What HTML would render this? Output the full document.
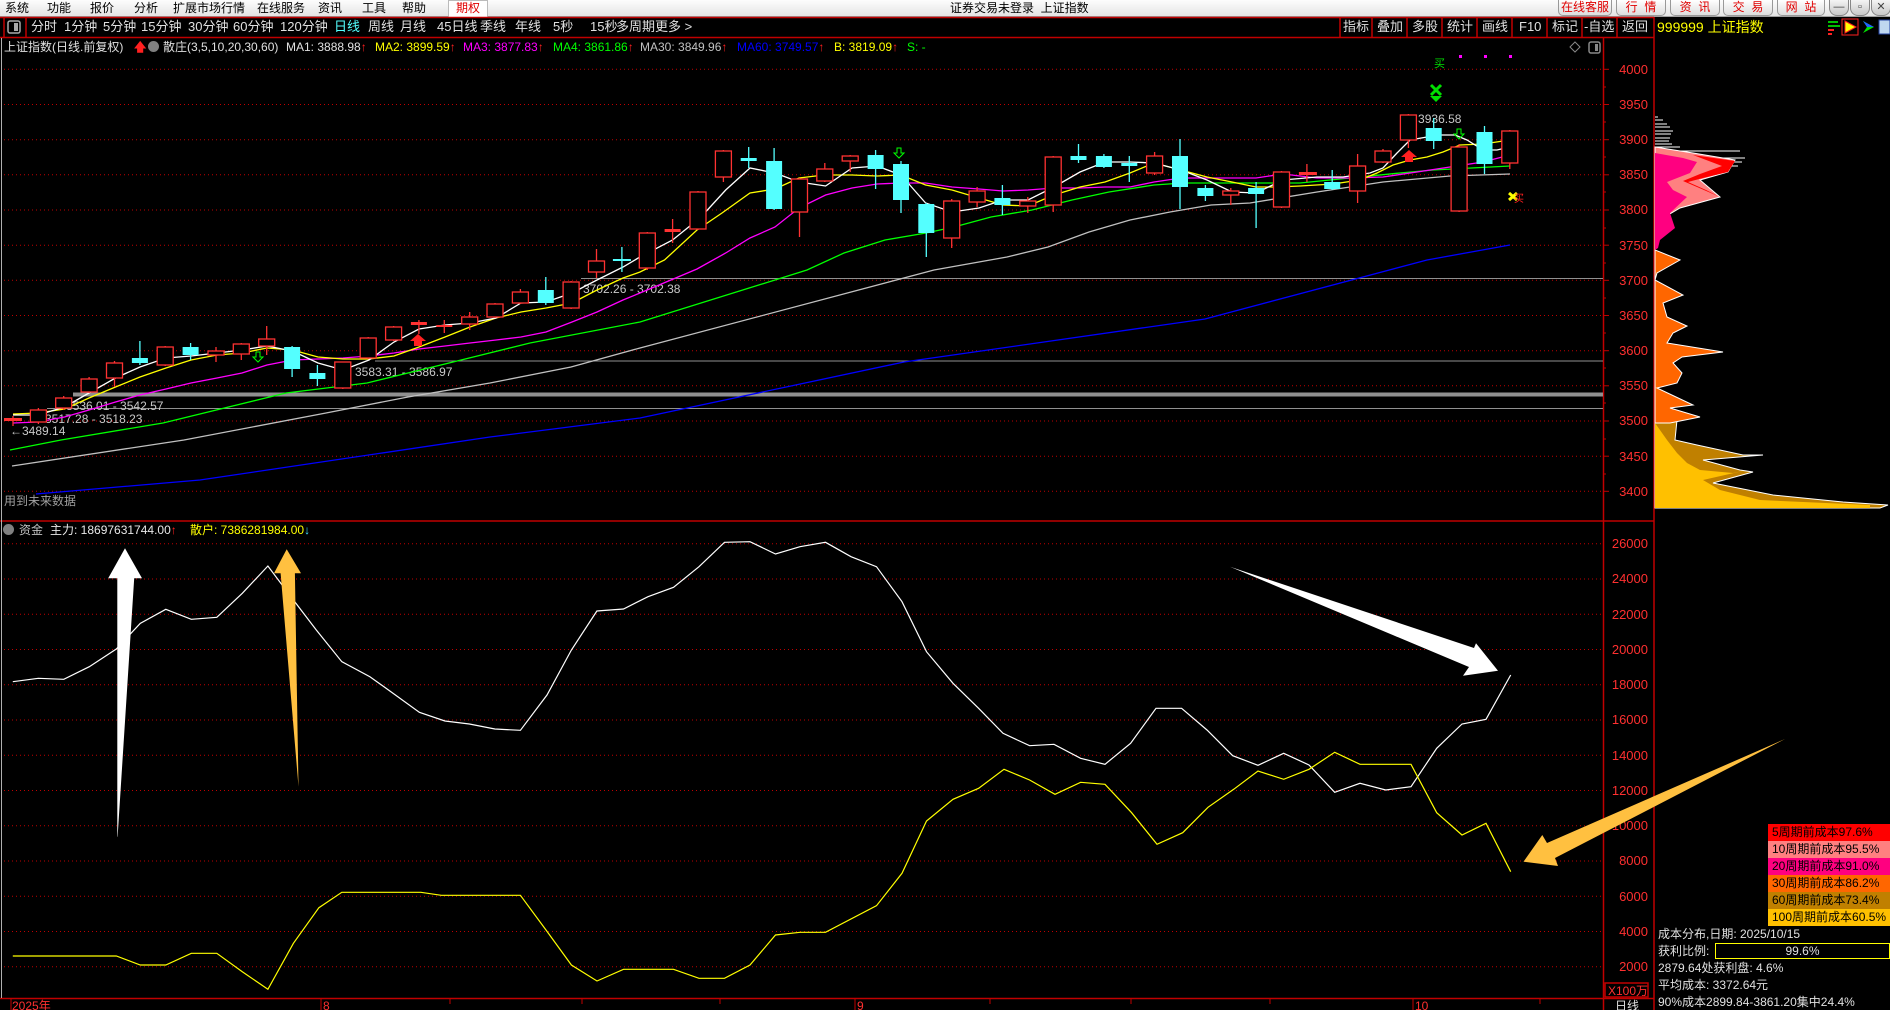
<!DOCTYPE html>
<html><head><meta charset="utf-8">
<style>
*{margin:0;padding:0;box-sizing:border-box}
body{width:1890px;height:1010px;background:#000;overflow:hidden;position:relative;font-family:"Liberation Sans","Noto Sans CJK SC",sans-serif;font-size:12px}
.menu{position:absolute;left:0;top:0;width:1890px;height:17px;background:linear-gradient(#fdfdfd,#e4e4e4);border-bottom:1px solid #a0a0a0}
.menu span{position:absolute;top:1px;font-size:12px;color:#000;line-height:15px}
.t{position:absolute;white-space:nowrap;line-height:14px}
.btn{position:absolute;top:0;height:16px;border:1px solid #999;border-top:none;border-radius:0 0 5px 5px;background:linear-gradient(#fff,#ddd);color:#e00000;font-size:12px;text-align:center;line-height:15px}
.wc{position:absolute;top:0;width:20px;height:16px;border-radius:0 0 8px 8px;background:linear-gradient(#f4f4f4,#c8c8c8);border:1px solid #888;border-top:none;font-size:11px;text-align:center;color:#444;line-height:14px}
.tb{position:absolute;top:20px;color:#e0e0e0;font-size:13px;line-height:14px;white-space:nowrap}
.lg{position:absolute;top:40px;font-size:12px;line-height:14px;white-space:nowrap}
.box{position:absolute;left:1768px;width:122px;height:17px;color:#000;font-size:12px;line-height:17px;padding-left:4px}
.rt{position:absolute;left:1658px;color:#e0e0e0;font-size:12px;line-height:14px;white-space:nowrap}
</style></head><body>
<div class="menu">
<span style="left:5px">系统</span><span style="left:47px">功能</span><span style="left:90px">报价</span><span style="left:134px">分析</span><span style="left:173px">扩展市场行情</span><span style="left:257px">在线服务</span><span style="left:318px">资讯</span><span style="left:362px">工具</span><span style="left:402px">帮助</span>
<span style="left:448px;top:0;width:40px;height:17px;background:#fff;border:1px solid #bbb;border-bottom:none;color:#e00000;text-align:center">期权</span>
<span style="left:950px">证券交易未登录&nbsp;&nbsp;上证指数</span>
</div>
<div class="btn" style="left:1558px;width:54px">在线客服</div>
<div class="btn" style="left:1616px;width:50px">行&nbsp;&nbsp;情</div>
<div class="btn" style="left:1670px;width:50px">资&nbsp;&nbsp;讯</div>
<div class="btn" style="left:1723px;width:50px">交&nbsp;&nbsp;易</div>
<div class="btn" style="left:1777px;width:48px">网&nbsp;&nbsp;站</div>
<div class="wc" style="left:1829px">—</div><div class="wc" style="left:1850px">▫</div><div class="wc" style="left:1871px">✕</div>

<svg style="position:absolute;left:0;top:0" width="1890" height="1010" viewBox="0 0 1890 1010">
<!-- toolbar frame -->
<g stroke="#c00000" stroke-width="1.5" fill="none">
<line x1="0" y1="17.5" x2="1654" y2="17.5"/><line x1="0" y1="37.5" x2="1654" y2="37.5"/>
<line x1="4" y1="17" x2="4" y2="38"/><line x1="26" y1="17" x2="26" y2="38"/>
<line x1="1340" y1="17" x2="1340" y2="38"/><line x1="1372" y1="17" x2="1372" y2="38"/><line x1="1407" y1="17" x2="1407" y2="38"/><line x1="1442" y1="17" x2="1442" y2="38"/><line x1="1477" y1="17" x2="1477" y2="38"/><line x1="1512" y1="17" x2="1512" y2="38"/><line x1="1547" y1="17" x2="1547" y2="38"/><line x1="1582" y1="17" x2="1582" y2="38"/><line x1="1617" y1="17" x2="1617" y2="38"/>
<line x1="1654" y1="17" x2="1654" y2="1010"/>
<line x1="1603.5" y1="38" x2="1603.5" y2="1010"/>
<line x1="0" y1="521" x2="1654" y2="521"/>
<line x1="0" y1="998.5" x2="1654" y2="998.5"/>
<rect x="1605" y="983" width="43" height="14"/>
</g>
<rect x="8" y="21" width="12" height="12" rx="2" fill="none" stroke="#aaa" stroke-width="1.5"/><rect x="14" y="23" width="4" height="8" fill="#aaa"/>
<line x1="1.5" y1="38" x2="1.5" y2="998" stroke="#b0b0b0"/>
<!-- main gridlines -->
<g stroke="#c00000" stroke-width="1" stroke-dasharray="1 3">
<line x1="4" y1="69.3" x2="1603" y2="69.3"/><line x1="4" y1="104.5" x2="1603" y2="104.5"/><line x1="4" y1="139.7" x2="1603" y2="139.7"/><line x1="4" y1="174.8" x2="1603" y2="174.8"/><line x1="4" y1="210" x2="1603" y2="210"/><line x1="4" y1="245.2" x2="1603" y2="245.2"/><line x1="4" y1="280.3" x2="1603" y2="280.3"/><line x1="4" y1="315.5" x2="1603" y2="315.5"/><line x1="4" y1="350.7" x2="1603" y2="350.7"/><line x1="4" y1="385.8" x2="1603" y2="385.8"/><line x1="4" y1="421" x2="1603" y2="421"/><line x1="4" y1="456.2" x2="1603" y2="456.2"/><line x1="4" y1="491.3" x2="1603" y2="491.3"/>
<line x1="4" y1="543.7" x2="1603" y2="543.7"/><line x1="4" y1="579" x2="1603" y2="579"/><line x1="4" y1="614.2" x2="1603" y2="614.2"/><line x1="4" y1="649.5" x2="1603" y2="649.5"/><line x1="4" y1="684.7" x2="1603" y2="684.7"/><line x1="4" y1="720" x2="1603" y2="720"/><line x1="4" y1="755.2" x2="1603" y2="755.2"/><line x1="4" y1="790.5" x2="1603" y2="790.5"/><line x1="4" y1="825.7" x2="1603" y2="825.7"/><line x1="4" y1="861" x2="1603" y2="861"/><line x1="4" y1="896.2" x2="1603" y2="896.2"/><line x1="4" y1="931.5" x2="1603" y2="931.5"/><line x1="4" y1="966.7" x2="1603" y2="966.7"/>
</g>
<!-- axis ticks -->
<g stroke="#c00000">
<line x1="1603" y1="69.3" x2="1609" y2="69.3"/><line x1="1603" y1="104.5" x2="1609" y2="104.5"/><line x1="1603" y1="139.7" x2="1609" y2="139.7"/><line x1="1603" y1="174.8" x2="1609" y2="174.8"/><line x1="1603" y1="210" x2="1609" y2="210"/><line x1="1603" y1="245.2" x2="1609" y2="245.2"/><line x1="1603" y1="280.3" x2="1609" y2="280.3"/><line x1="1603" y1="315.5" x2="1609" y2="315.5"/><line x1="1603" y1="350.7" x2="1609" y2="350.7"/><line x1="1603" y1="385.8" x2="1609" y2="385.8"/><line x1="1603" y1="421" x2="1609" y2="421"/><line x1="1603" y1="456.2" x2="1609" y2="456.2"/><line x1="1603" y1="491.3" x2="1609" y2="491.3"/>
<line x1="1603" y1="87" x2="1606" y2="87"/><line x1="1603" y1="122" x2="1606" y2="122"/><line x1="1603" y1="157" x2="1606" y2="157"/><line x1="1603" y1="192" x2="1606" y2="192"/><line x1="1603" y1="228" x2="1606" y2="228"/><line x1="1603" y1="263" x2="1606" y2="263"/><line x1="1603" y1="298" x2="1606" y2="298"/><line x1="1603" y1="333" x2="1606" y2="333"/><line x1="1603" y1="368" x2="1606" y2="368"/><line x1="1603" y1="403" x2="1606" y2="403"/><line x1="1603" y1="439" x2="1606" y2="439"/><line x1="1603" y1="474" x2="1606" y2="474"/>
<line x1="11" y1="998" x2="11" y2="1010"/><line x1="321" y1="998" x2="321" y2="1010"/><line x1="450" y1="998" x2="450" y2="1004"/><line x1="582" y1="998" x2="582" y2="1004"/><line x1="720" y1="998" x2="720" y2="1004"/><line x1="855" y1="998" x2="855" y2="1010"/><line x1="990" y1="998" x2="990" y2="1004"/><line x1="1131" y1="998" x2="1131" y2="1004"/><line x1="1270" y1="998" x2="1270" y2="1004"/><line x1="1413" y1="998" x2="1413" y2="1010"/><line x1="1540" y1="998" x2="1540" y2="1004"/>
</g>
<g fill="#ff3030" font-size="13" text-anchor="end" font-family="Liberation Sans, sans-serif">
<text x="1648" y="74">4000</text><text x="1648" y="109">3950</text><text x="1648" y="144">3900</text><text x="1648" y="179">3850</text><text x="1648" y="214">3800</text><text x="1648" y="250">3750</text><text x="1648" y="285">3700</text><text x="1648" y="320">3650</text><text x="1648" y="355">3600</text><text x="1648" y="390">3550</text><text x="1648" y="425">3500</text><text x="1648" y="461">3450</text><text x="1648" y="496">3400</text>
<text x="1648" y="548">26000</text><text x="1648" y="583">24000</text><text x="1648" y="619">22000</text><text x="1648" y="654">20000</text><text x="1648" y="689">18000</text><text x="1648" y="724">16000</text><text x="1648" y="760">14000</text><text x="1648" y="795">12000</text><text x="1648" y="830">10000</text><text x="1648" y="865">8000</text><text x="1648" y="901">6000</text><text x="1648" y="936">4000</text><text x="1648" y="971">2000</text>
<text x="1648" y="995" font-size="12">X100万</text>
</g>
<g fill="#ff3030" font-size="12" font-family="Liberation Sans, Noto Sans CJK SC, sans-serif">
<text x="12" y="1010">2025年</text><text x="323" y="1010">8</text><text x="857" y="1010">9</text><text x="1415" y="1010">10</text><text x="1615" y="1010" fill="#e0e0e0">日线</text>
</g>
<!-- horizontal gray support lines -->
<g stroke="#909090">
<line x1="581" y1="278.5" x2="1603" y2="278.5"/>
<line x1="375" y1="361" x2="1603" y2="361"/>
<line x1="73" y1="394.5" x2="1603" y2="394.5" stroke-width="4"/>
<line x1="47" y1="408.5" x2="1603" y2="408.5"/>
</g>
<g fill="#c8c8c8" font-size="12" font-family="Liberation Sans, sans-serif">
<text x="583" y="293">3702.26 - 3702.38</text>
<text x="355" y="376">3583.31 - 3586.97</text>
<text x="66" y="410">3536.01 - 3542.57</text>
<text x="45" y="423">3517.28 - 3518.23</text>
<text x="10" y="435">←3489.14</text>
<text x="1408" y="123">↖3936.58</text>
<text x="4" y="505" fill="#a0a0a0" font-family="Liberation Sans, Noto Sans CJK SC, sans-serif">用到未来数据</text>
</g>
<!-- MA lines -->
<g fill="none" stroke-width="1.3">
<polyline stroke="#0000ff" points="36,494 200,480 490,437 640,418 904,362 1205,319 1427,260 1510,245"/>
<polyline stroke="#c0c0c0" points="12,466 184,440 326,413 408,397 490,383 571,367 640,348 934,270 1007,257 1048,247 1089,232 1130,220 1170,212 1211,205 1250,203 1317,192 1383,182 1450,176 1510,174"/>
<polyline stroke="#00ff00" points="10,450 61,440 163,423 286,393 367,383 449,363 530,343 640,322 807,270 844,253 885,240 926,233 954,227 991,217 1032,210 1072,200 1109,192 1154,185 1183,183 1280,183 1300,183 1350,178 1400,173 1433,170 1510,166"/>
<polyline stroke="#ff00ff" points="13,423 38,422 64.5,417 89,410 115.5,402 140,395 166,389 191,383 217,378 242,373 267,365 292.5,360 318,359 343,358 369,356 394,353 419,349 445,346 470,343 496,340 521,337 546,332 572,322 597,312 623,300 640,293 697,269 725.7,253 750,238 775,227 799,208 825.6,195 852,188 877,184 901,183 925.6,183 952,187 979,189 1003,191 1028,190 1054,188 1080,188 1105,187 1130,187 1154,182 1181,178 1207,178 1232,178 1256,178 1283,174 1317,178 1350,178 1383,177 1417,172 1450,167 1483,162 1510,155"/>
<polyline stroke="#ffff00" points="13,414 38,413 64.5,409 89,398 115.5,387 140,377 166,368 191,360 217,355 242,353 267,348 292.5,350 318,357 343,359 369,359 394,356 419,347 445,337 470,327 496,318 521,312 546,308 572,303 597,290 623,278 640,272 664.5,260 697,230 722,213 750,193 775,189 799,178 824,175 852,175 877,176 901,175 925.6,185 952,190 979,198 1003,205 1028,206 1054,195 1080,187 1105,182 1130,173 1154,163 1181,170 1207,177 1232,182 1256,187 1277,187 1300,186 1333,184 1360,180 1377,173 1393,165 1410,160 1427,157 1443,152 1460,145 1483,144 1510,140"/>
<polyline stroke="#ffffff" points="13,415 38,415 64.5,407 89,393 115.5,378 140,367 166,358 191,356 217,353 242,350 267,346 292.5,351 318,363 343,370 369,360 394,342 419,329 445,325 470,323 496,318 521,303 546,302 572,293 597,280 623,267 640,257 672.6,240 701,217 725.7,190 750,168 775,173 799,182 825.6,186 852,168 877,166 901,175 925.6,203 952,212 979,208 1003,200 1028,200 1054,187 1080,172 1105,162 1130,162 1154,163 1181,170 1207,180 1232,192 1256,193 1283,180 1317,177 1343,177 1370,173 1383,168 1397,153 1410,140 1427,137 1440,135 1455,135 1467,140 1483,150 1497,150 1510,147"/>
</g>
<!-- candles: wicks -->
<g stroke="#ff3232" stroke-width="1.3">
<line x1="13" y1="416" x2="13" y2="426"/><line x1="38.4" y1="408" x2="38.4" y2="424"/><line x1="63.7" y1="396" x2="63.7" y2="410"/><line x1="89.1" y1="377" x2="89.1" y2="393"/><line x1="114.5" y1="361" x2="114.5" y2="387"/><line x1="165.2" y1="346" x2="165.2" y2="366"/><line x1="216" y1="347" x2="216" y2="362"/><line x1="241.3" y1="343" x2="241.3" y2="360"/><line x1="266.7" y1="326" x2="266.7" y2="355"/><line x1="342.8" y1="362" x2="342.8" y2="389"/><line x1="368.2" y1="337" x2="368.2" y2="359"/><line x1="393.6" y1="326" x2="393.6" y2="341"/><line x1="418.9" y1="320" x2="418.9" y2="334"/><line x1="444.3" y1="320" x2="444.3" y2="333"/><line x1="469.7" y1="312" x2="469.7" y2="330"/><line x1="495" y1="303" x2="495" y2="318"/><line x1="520.4" y1="289" x2="520.4" y2="304"/><line x1="571.1" y1="281" x2="571.1" y2="309"/><line x1="596.5" y1="249" x2="596.5" y2="278"/><line x1="647.3" y1="232" x2="647.3" y2="270"/><line x1="672.6" y1="219" x2="672.6" y2="243"/><line x1="698" y1="191" x2="698" y2="230"/><line x1="723.4" y1="150" x2="723.4" y2="182"/><line x1="799.5" y1="178" x2="799.5" y2="237"/><line x1="824.8" y1="163" x2="824.8" y2="182"/><line x1="850.2" y1="155" x2="850.2" y2="172"/><line x1="951.7" y1="199" x2="951.7" y2="248"/><line x1="977.1" y1="187" x2="977.1" y2="207"/><line x1="1027.8" y1="197" x2="1027.8" y2="213"/><line x1="1053.2" y1="156" x2="1053.2" y2="212"/><line x1="1154.6" y1="152" x2="1154.6" y2="175"/><line x1="1230.8" y1="188" x2="1230.8" y2="205"/><line x1="1281.5" y1="171" x2="1281.5" y2="208"/><line x1="1306.9" y1="164" x2="1306.9" y2="182"/><line x1="1357.6" y1="154" x2="1357.6" y2="203"/><line x1="1383" y1="149" x2="1383" y2="163"/><line x1="1408.4" y1="114" x2="1408.4" y2="148"/><line x1="1459.1" y1="144" x2="1459.1" y2="212"/><line x1="1509.8" y1="130" x2="1509.8" y2="169"/>
</g>
<g stroke="#54ffff" stroke-width="1.3">
<line x1="139.9" y1="341" x2="139.9" y2="365"/><line x1="190.6" y1="343" x2="190.6" y2="360"/><line x1="292.1" y1="346" x2="292.1" y2="377"/><line x1="317.4" y1="365" x2="317.4" y2="386"/><line x1="545.8" y1="277" x2="545.8" y2="305"/><line x1="621.9" y1="247" x2="621.9" y2="272"/><line x1="748.7" y1="147" x2="748.7" y2="168"/><line x1="774.1" y1="148" x2="774.1" y2="210"/><line x1="875.6" y1="150" x2="875.6" y2="189"/><line x1="901" y1="161" x2="901" y2="213"/><line x1="926.3" y1="203" x2="926.3" y2="257"/><line x1="1002.4" y1="185" x2="1002.4" y2="215"/><line x1="1078.5" y1="144" x2="1078.5" y2="163"/><line x1="1103.9" y1="154" x2="1103.9" y2="168"/><line x1="1129.3" y1="156" x2="1129.3" y2="182"/><line x1="1180" y1="139" x2="1180" y2="209"/><line x1="1205.4" y1="185" x2="1205.4" y2="201"/><line x1="1256.1" y1="182" x2="1256.1" y2="228"/><line x1="1332.2" y1="170" x2="1332.2" y2="190"/><line x1="1433.7" y1="118" x2="1433.7" y2="149"/><line x1="1484.5" y1="126" x2="1484.5" y2="174"/>
</g>
<!-- red hollow bodies -->
<g fill="#000" stroke="#ff3232" stroke-width="1.3">
<rect x="30.4" y="410" width="16" height="12"/><rect x="55.7" y="398" width="16" height="10"/><rect x="81.1" y="379" width="16" height="13"/><rect x="106.5" y="363" width="16" height="15"/><rect x="157.2" y="347" width="16" height="18"/><rect x="208" y="351" width="16" height="4"/><rect x="233.3" y="344" width="16" height="10"/><rect x="258.7" y="339" width="16" height="7"/><rect x="334.8" y="362" width="16" height="26"/><rect x="360.2" y="338" width="16" height="20"/><rect x="385.6" y="327" width="16" height="13"/><rect x="461.7" y="317" width="16" height="7"/><rect x="487" y="304" width="16" height="13"/><rect x="512.4" y="292" width="16" height="11"/><rect x="563.1" y="282" width="16" height="26"/><rect x="588.5" y="261" width="16" height="11"/><rect x="639.3" y="233" width="16" height="35"/><rect x="690" y="192" width="16" height="37"/><rect x="715.4" y="151" width="16" height="26"/><rect x="791.5" y="179" width="16" height="33"/><rect x="816.8" y="169" width="16" height="12"/><rect x="842.2" y="156" width="16" height="5"/><rect x="943.7" y="201" width="16" height="37"/><rect x="969.1" y="191" width="16" height="11"/><rect x="1019.8" y="201" width="16" height="5"/><rect x="1045.2" y="157" width="16" height="48"/><rect x="1146.6" y="156" width="16" height="17"/><rect x="1222.8" y="191" width="16" height="4"/><rect x="1273.5" y="172" width="16" height="35"/><rect x="1349.6" y="166" width="16" height="25"/><rect x="1375" y="151" width="16" height="11"/><rect x="1400.4" y="115" width="16" height="25"/><rect x="1451.1" y="147" width="16" height="64"/><rect x="1501.8" y="131" width="16" height="32"/>
</g>
<g fill="#ff3232">
<rect x="4" y="418" width="18" height="3"/><rect x="410.9" y="322" width="16" height="3"/><rect x="436.3" y="325" width="16" height="2"/><rect x="664.6" y="229" width="16" height="3"/><rect x="1298.9" y="172" width="18" height="3"/>
</g>
<!-- cyan bodies -->
<g fill="#54ffff">
<rect x="131.9" y="358" width="16" height="5"/><rect x="182.6" y="347" width="16" height="8"/><rect x="284.1" y="347" width="16" height="22"/><rect x="309.4" y="373" width="16" height="6"/><rect x="537.8" y="290" width="16" height="13"/><rect x="612.9" y="259" width="18" height="2"/><rect x="740.7" y="158" width="16" height="3"/><rect x="766.1" y="161" width="16" height="48"/><rect x="867.6" y="155" width="16" height="14"/><rect x="893" y="164" width="16" height="36"/><rect x="918.3" y="204" width="16" height="29"/><rect x="994.4" y="198" width="16" height="7"/><rect x="1070.5" y="156" width="16" height="4"/><rect x="1095.9" y="156" width="16" height="11"/><rect x="1121.3" y="163" width="16" height="3"/><rect x="1172" y="156" width="16" height="31"/><rect x="1197.4" y="188" width="16" height="8"/><rect x="1248.1" y="188" width="16" height="6"/><rect x="1324.2" y="182" width="16" height="7"/><rect x="1425.7" y="128" width="16" height="13"/><rect x="1476.5" y="132" width="16" height="32"/>
</g>
<!-- signal arrows -->
<path d="M414,346 v-5 h-4 l8,-7 l8,7 h-4 v5z" fill="#ff2020"/>
<path d="M1405,162 v-5 h-4 l8,-7 l8,7 h-4 v5z" fill="#ff2020"/>
<path d="M256,352 v5 h-3 l5,5 l5,-5 h-3 v-5z" fill="none" stroke="#00ff00"/>
<path d="M897,148 v5 h-3 l5,5 l5,-5 h-3 v-5z" fill="none" stroke="#00ff00"/>
<path d="M1457,129 v5 h-3 l5,5 l5,-5 h-3 v-5z" fill="none" stroke="#00ff00"/>
<path d="M1431,85 l10,10 M1441,85 l-10,10" stroke="#00e000" stroke-width="3"/>
<path d="M1430,96 h12 l-6,6z" fill="#00e000"/>
<text x="1434" y="67" fill="#00e000" font-size="11" font-family="Noto Sans CJK SC, sans-serif">买</text>
<path d="M1509,193 l8,7 M1517,193 l-8,7" stroke="#ffff00" stroke-width="3"/>
<text x="1514" y="202" fill="#ff2020" font-size="10" font-family="Noto Sans CJK SC, sans-serif">买</text>
<g fill="#ff00ff"><rect x="1459" y="55" width="3" height="3"/><rect x="1484" y="55" width="3" height="3"/><rect x="1509" y="55" width="3" height="3"/></g>
<path d="M1575,42 l5,5 l-5,5 l-5,-5z" fill="none" stroke="#888"/>
<rect x="1589" y="42" width="11" height="11" rx="2" fill="none" stroke="#888" stroke-width="1.5"/><rect x="1595" y="44" width="3" height="7" fill="#888"/>
<!-- sub chart -->
<polyline fill="none" stroke="#ffffff" stroke-width="1.2" points="12.8,681.7 38.3,678.3 63.8,679.3 89.3,666.7 116.3,649 140.3,623.3 165.8,609.3 191.3,619.3 216.8,617.3 242.3,593.3 267.9,566 293.4,600 316.3,630 341.8,661.7 369.9,676.7 395.4,695 419.4,712.3 444.9,721 469.4,724 494.9,729 520.4,730.3 547,695 571.4,650 596.9,611 623.5,609 648,596.7 673.5,587.3 699,566.7 724.5,542.3 750,541.7 775.5,554 800,546.7 825.5,542.3 851,556.7 876.5,566.7 902,601.7 926.5,651.7 953,683.3 978.6,708.3 1003,733.3 1029.6,745.7 1054,744.3 1080.6,758.3 1105,764.3 1130.6,743.3 1156,708.3 1181.6,708.3 1207,730 1232.7,755.7 1258,765.3 1283.7,753.3 1309,765 1334.7,792.3 1360,783.3 1385.7,790 1411,786.7 1436.7,748.3 1462,724 1486,719.3 1510.7,675"/>
<polyline fill="none" stroke="#ffff00" stroke-width="1.2" points="12.8,956 116.3,956 140.3,965 165.8,965 191.3,953.3 216.8,953.3 242.3,971.7 267.9,989.3 293.4,943.3 318.9,907.7 341.8,892.3 420.9,892.3 441.3,895.3 520.4,895.3 546,930 571.4,965 597,981 623.5,969.3 673.5,969.3 699,978.3 724.5,978.3 750,965 775.5,935 800,932.3 825.5,932.3 876.5,905.7 902,873.3 926.5,821 953,799.3 978.6,788.3 1004,769.3 1029.6,780 1055,794.3 1080.6,782.3 1105,784.3 1131.6,812.7 1157,844.3 1182.7,832.7 1208,807.3 1233.7,789.3 1258,771 1283.7,779.3 1309,769.3 1334.7,752.3 1360,764.3 1411,764.3 1436.7,812.7 1462,835 1486,823.3 1510.7,871.7"/>
<!-- annotation arrows -->
<path d="M125,548.3 L142,578.3 L134.2,578.3 L117.6,836.7 L117.3,836.7 L117.3,578.3 L108.2,578.3Z" fill="#ffffff"/>
<path d="M286.7,549.3 L301,573.3 L294.9,573.3 L298.5,786.7 L280.6,573.3 L274,573.3Z" fill="#ffc040"/>
<path d="M1230,566.7 L1474,648 L1476,643.3 L1498,670.7 L1463,675.7 L1469,667Z" fill="#ffffff"/>
<path d="M1523.5,861.7 L1542.3,835 L1547,843 L1785,739 L1555,858 L1558,866Z" fill="#ffc040"/>
<!-- right panel profile -->
<g stroke="#fff" stroke-width="1">
<line x1="1655" y1="117" x2="1658" y2="117"/><line x1="1655" y1="120" x2="1663" y2="120"/><line x1="1655" y1="124" x2="1667" y2="124"/><line x1="1655" y1="127" x2="1670" y2="127"/><line x1="1655" y1="131" x2="1673" y2="131"/><line x1="1655" y1="134" x2="1671" y2="134"/><line x1="1655" y1="138" x2="1670" y2="138"/><line x1="1655" y1="141" x2="1669" y2="141"/><line x1="1655" y1="144" x2="1672" y2="144"/><line x1="1655" y1="147" x2="1680" y2="147"/><line x1="1680" y1="151" x2="1740" y2="151"/><line x1="1720" y1="158" x2="1745" y2="158"/><line x1="1720" y1="162" x2="1742" y2="162"/><line x1="1715" y1="166" x2="1738" y2="166"/>
</g>
<polygon fill="#c08000" stroke="#fff" points="1655,385 1670,410 1677,420 1675,440 1697,445 1743,455 1763,455 1703,460 1740,470 1753,472 1713,483 1773,495 1843,502 1888,505 1880,508 1655,508"/>
<polygon fill="#ffc000" points="1655,423 1667,440 1677,453 1687,463 1700,470 1733,473 1747,470 1703,480 1720,490 1760,500 1870,505 1870,508 1655,508"/>
<polygon fill="#ff6600" stroke="#fff" points="1655,150 1667,157 1657,177 1660,210 1657,240 1655,250 1680,260 1657,273 1655,280 1683,295 1663,303 1667,317 1687,326 1673,333 1667,343 1723,352 1682,357 1673,363 1682,373 1677,383 1657,388 1693,405 1670,408 1700,417 1670,423 1655,423"/>
<polygon fill="#ff8080" stroke="#fff" points="1655,147 1693,153 1735,160 1728,172 1700,180 1720,197 1680,208 1668,215 1655,215"/>
<polygon fill="#ff0000" points="1693,155 1735,161 1728,172 1703,178 1688,182 1706,190 1720,197 1697,187 1683,181 1700,174 1722,166"/>
<polygon fill="#ff0080" points="1655,153 1683,158 1697,162 1690,173 1667,182 1673,190 1687,197 1670,213 1675,228 1660,240 1658,248 1655,250"/>
<!-- top right icons -->
<g stroke-width="2"><line x1="1828" y1="22" x2="1838" y2="22" stroke="#00c000"/><line x1="1828" y1="26" x2="1840" y2="26" stroke="#00c000"/><line x1="1828" y1="30" x2="1834" y2="30" stroke="#ff2020"/><line x1="1828" y1="34" x2="1832" y2="34" stroke="#ff2020"/></g>
<rect x="1842" y="19" width="16" height="16" fill="none" stroke="#ff2020"/><path d="M1845,21 l11,6 l-11,6z" fill="#ffff00" stroke="#ff2020"/>
<path d="M1863,21 l11,6 l-11,6 l4,-6z" fill="#00e000"/><path d="M1863,21 l11,6 l-7,0z" fill="#2060ff"/>
<rect x="1879" y="20" width="11" height="14" fill="#c0d8f0" stroke="#2040a0"/>
</svg>

<!-- toolbar text -->
<div class="tb" style="left:31px">分时</div><div class="tb" style="left:64px">1分钟</div><div class="tb" style="left:103px">5分钟</div><div class="tb" style="left:141px">15分钟</div><div class="tb" style="left:188px">30分钟</div><div class="tb" style="left:233px">60分钟</div><div class="tb" style="left:280px">120分钟</div><div class="tb" style="left:334px;color:#54ffff">日线</div><div class="tb" style="left:368px">周线</div><div class="tb" style="left:400px">月线</div><div class="tb" style="left:437px">45日线</div><div class="tb" style="left:480px">季线</div><div class="tb" style="left:515px">年线</div><div class="tb" style="left:553px">5秒</div><div class="tb" style="left:590px">15秒</div><div class="tb" style="left:616px">多周期</div><div class="tb" style="left:655px">更多 &gt;</div>
<div class="tb" style="left:1343px">指标</div><div class="tb" style="left:1377px">叠加</div><div class="tb" style="left:1412px">多股</div><div class="tb" style="left:1447px">统计</div><div class="tb" style="left:1482px">画线</div><div class="tb" style="left:1519px">F10</div><div class="tb" style="left:1552px">标记</div><div class="tb" style="left:1584px">-自选</div><div class="tb" style="left:1622px">返回</div>
<div class="tb" style="left:1657px;color:#ffff00;font-size:14px">999999 上证指数</div>

<!-- legend -->
<div class="lg" style="left:4px;color:#e0e0e0">上证指数(日线.前复权)</div>
<div class="lg" style="left:134px;color:#ff2020;font-weight:bold">🡅</div>
<div class="lg" style="left:148px;top:41px;width:11px;height:11px;border-radius:50%;background:#808080"></div>
<div class="lg" style="left:163px;color:#e0e0e0">散庄(3,5,10,20,30,60)</div>
<div class="lg" style="left:286px;color:#e0e0e0">MA1: 3888.98<span style="color:#ff2020">↑</span></div>
<div class="lg" style="left:375px;color:#ffff00">MA2: 3899.59<span style="color:#ff2020">↑</span></div>
<div class="lg" style="left:463px;color:#ff00ff">MA3: 3877.83<span style="color:#ff2020">↑</span></div>
<div class="lg" style="left:553px;color:#00ff00">MA4: 3861.86<span style="color:#ff2020">↑</span></div>
<div class="lg" style="left:640px;color:#c0c0c0">MA30: 3849.96<span style="color:#ff2020">↑</span></div>
<div class="lg" style="left:737px;color:#0000ff">MA60: 3749.57<span style="color:#ff2020">↑</span></div>
<div class="lg" style="left:834px;color:#ffff00">B: 3819.09<span style="color:#ff2020">↑</span></div>
<div class="lg" style="left:907px;color:#00ff00">S: -</div>

<!-- sub legend -->
<div class="t" style="left:3px;top:524px;width:11px;height:11px;border-radius:50%;background:#808080"></div>
<div class="t" style="left:19px;top:523px;color:#c0c0c0">资金</div>
<div class="t" style="left:50px;top:523px;color:#e8e8e8">主力: 18697631744.00<span style="color:#ff2020">↑</span></div>
<div class="t" style="left:190px;top:523px;color:#ffff00">散户: 7386281984.00<span style="color:#40e0ff">↓</span></div>

<!-- right panel legend -->
<div class="box" style="top:824px;background:#ff0000">5周期前成本97.6%</div>
<div class="box" style="top:841px;background:#ff8080">10周期前成本95.5%</div>
<div class="box" style="top:858px;background:#ff0080">20周期前成本91.0%</div>
<div class="box" style="top:875px;background:#ff6600">30周期前成本86.2%</div>
<div class="box" style="top:892px;background:#c08000">60周期前成本73.4%</div>
<div class="box" style="top:909px;background:#ffc000">100周期前成本60.5%</div>
<div class="rt" style="top:927px">成本分布,日期: 2025/10/15</div>
<div class="rt" style="top:944px">获利比例:</div>
<div class="t" style="left:1715px;top:943px;width:175px;height:16px;border:1px solid #ffff00;color:#e0e0e0;text-align:center;line-height:14px">99.6%</div>
<div class="rt" style="top:961px">2879.64处获利盘: 4.6%</div>
<div class="rt" style="top:978px">平均成本: 3372.64元</div>
<div class="rt" style="top:995px">90%成本2899.84-3861.20集中24.4%</div>
</body></html>
